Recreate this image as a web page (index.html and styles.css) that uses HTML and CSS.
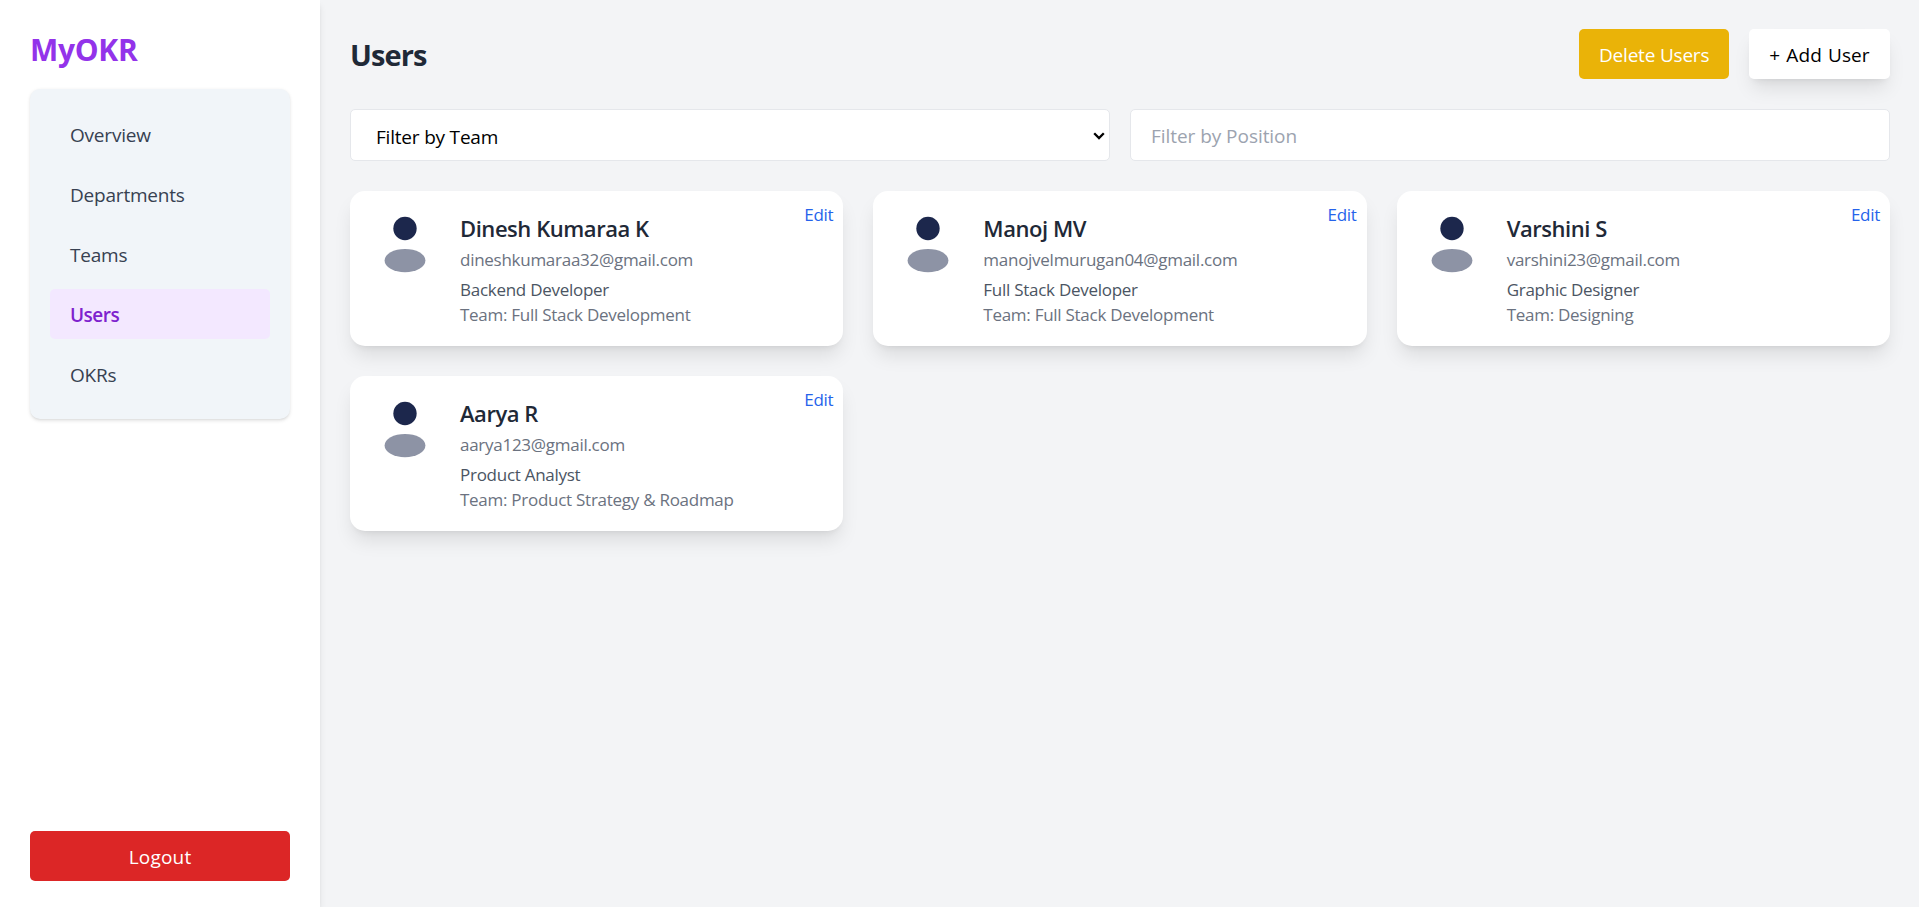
FILE: index.html
```html
<!DOCTYPE html>
<html lang="en">
<head>
<meta charset="utf-8">
<title>MyOKR</title>
<link rel="stylesheet" href="styles.css">
</head>
<body>
<svg width="0" height="0" class="defs" aria-hidden="true">
  <symbol id="avatar" viewBox="0 0 24 24">
    <circle cx="12" cy="6" r="4" fill="#1c274c"/>
    <ellipse cx="12" cy="17" rx="7" ry="4" fill="#1c274c" opacity="0.5"/>
  </symbol>
</svg>
<div class="app">
  <aside class="sidebar">
    <div>
      <h1 class="brand"><span>MyOKR</span></h1>
      <nav class="nav">
        <a class="nav-item"><span>Overview</span></a>
        <a class="nav-item"><span>Departments</span></a>
        <a class="nav-item"><span>Teams</span></a>
        <a class="nav-item active"><span>Users</span></a>
        <a class="nav-item"><span>OKRs</span></a>
      </nav>
    </div>
    <button class="btn btn-logout">Logout</button>
  </aside>
  <main class="main">
    <header class="header">
      <h2 class="title">Users</h2>
      <div class="actions">
        <button class="btn btn-delete">Delete Users</button>
        <button class="btn btn-add">+ Add User</button>
      </div>
    </header>
    <div class="filters">
      <div class="select">
        <select class="field field-select"><option>Filter by Team</option></select>
        <svg class="chevron" viewBox="0 0 12 8"><path d="M1.2 1.2 6 6 10.8 1.2" fill="none" stroke="#000" stroke-width="2.3"/></svg>
      </div>
      <input class="field field-input" placeholder="Filter by Position">
    </div>
    <section class="cards">
      <article class="card">
        <svg class="avatar"><use href="#avatar"/></svg>
        <div>
          <h3 class="name">Dinesh Kumaraa K</h3>
          <p class="email">dineshkumaraa32@gmail.com</p>
          <p class="position">Backend Developer</p>
          <p class="team">Team: Full Stack Development</p>
        </div>
        <a class="edit">Edit</a>
      </article>
      <article class="card">
        <svg class="avatar"><use href="#avatar"/></svg>
        <div>
          <h3 class="name">Manoj MV</h3>
          <p class="email">manojvelmurugan04@gmail.com</p>
          <p class="position">Full Stack Developer</p>
          <p class="team">Team: Full Stack Development</p>
        </div>
        <a class="edit">Edit</a>
      </article>
      <article class="card">
        <svg class="avatar"><use href="#avatar"/></svg>
        <div>
          <h3 class="name">Varshini S</h3>
          <p class="email">varshini23@gmail.com</p>
          <p class="position">Graphic Designer</p>
          <p class="team">Team: Designing</p>
        </div>
        <a class="edit">Edit</a>
      </article>
      <article class="card">
        <svg class="avatar"><use href="#avatar"/></svg>
        <div>
          <h3 class="name">Aarya R</h3>
          <p class="email">aarya123@gmail.com</p>
          <p class="position">Product Analyst</p>
          <p class="team">Team: Product Strategy &amp; Roadmap</p>
        </div>
        <a class="edit">Edit</a>
      </article>
    </section>
  </main>
</div>
</body>
</html>
```
FILE: styles.css
```css
* { box-sizing: border-box; margin: 0; padding: 0; }
body {
  font-family: "Open Sans", "Noto Sans", sans-serif;
  font-size: 19px;
  line-height: 30px;
  color: #000;
  background: #f3f4f6;
}
.defs { position: absolute; }
.app { display: flex; height: 100vh; overflow: hidden; }

.sidebar {
  width: 320px;
  flex: none;
  display: flex;
  flex-direction: column;
  justify-content: space-between;
  padding: 30px 30px 26px;
  background: #fff;
  box-shadow: 0 5px 7.5px -1px rgba(0,0,0,.1), 0 2.5px 5px -2.5px rgba(0,0,0,.1);
}
.brand {
  font-size: 30px;
  font-weight: 700;
  line-height: 40px;
  letter-spacing: -.3px;
  color: #9333ea;
  margin-bottom: 19px;
}
.nav {
  display: flex;
  flex-direction: column;
  gap: 10px;
  padding: 20px;
  border-radius: 10px;
  background: #f1f5f9;
  box-shadow: 0 1.25px 3.75px rgba(0,0,0,.1), 0 1.25px 2.5px -1.25px rgba(0,0,0,.1);
}
.nav-item { padding: 11px 20px 9px; border-radius: 5px; color: #374151; letter-spacing: -.2px; }
.nav-item.active { background: #f3e8ff; color: #7e22ce; font-weight: 600; letter-spacing: -.5px; }

.btn {
  font: inherit;
  height: 50px;
  padding: 1px 20px 0;
  border: 0;
  border-radius: 5px;
  letter-spacing: -.2px;
  white-space: nowrap;
}
.btn-logout { background: #dc2626; color: #fff; letter-spacing: .2px; }
.btn-delete { width: 150px; background: #eab308; color: #fff; }
.btn-add {
  width: 141px;
  background: #fff;
  color: #000;
  letter-spacing: .1px;
  word-spacing: 1px;
  box-shadow: 0 12.5px 18.75px -3.75px rgba(0,0,0,.1), 0 5px 7.5px -5px rgba(0,0,0,.1);
}

.main { flex: 1; min-width: 0; padding: 29px 29px 30px 30px; }
.header { display: flex; justify-content: space-between; align-items: center; margin-bottom: 30px; }
.title { font-size: 29px; font-weight: 700; line-height: 40px; color: #1f2937; letter-spacing: -.9px; padding-top: 2px; }
.actions { display: flex; gap: 20px; }

.filters { display: grid; grid-template-columns: 1fr 1fr; gap: 20px; margin-bottom: 30px; }
.select { display: grid; align-items: center; justify-items: end; }
.select > * { grid-area: 1 / 1; }
.field {
  width: 100%;
  height: 52px;
  padding: 0 20px;
  border: 1px solid #e5e7eb;
  border-radius: 5px;
  background: #fff;
  font: inherit;
  letter-spacing: -.2px;
  color: #000;
}
.field-select { appearance: none; padding: 4px 20px 0 25px; }
.field-input { padding-top: 2px; letter-spacing: -.05px; }
.field::placeholder { color: #9ca3af; opacity: 1; }
.chevron { width: 12px; height: 8px; margin-right: 5px; margin-top: 1px; pointer-events: none; }

.cards { display: grid; grid-template-columns: repeat(3, 1fr); gap: 30px; }
.card {
  position: relative;
  display: flex;
  gap: 20px;
  height: 155px;
  padding: 20px;
  border-radius: 15px;
  background: #fff;
  font-size: 17px;
  line-height: 25px;
  letter-spacing: -.27px;
  white-space: nowrap;
  box-shadow: 0 12.5px 18.75px -3.75px rgba(0,0,0,.1), 0 5px 7.5px -5px rgba(0,0,0,.1);
}
.avatar { width: 70px; height: 70px; flex: none; }
.name { font-size: 22px; font-weight: 600; line-height: 35px; letter-spacing: -.45px; color: #1f2937; }
.email { padding-top: 1px; color: #6b7280; margin-bottom: 5px; }
.position { color: #4b5563; }
.team { color: #6b7280; }
.edit { position: absolute; top: 11px; right: 10px; color: #2563eb; }
```
